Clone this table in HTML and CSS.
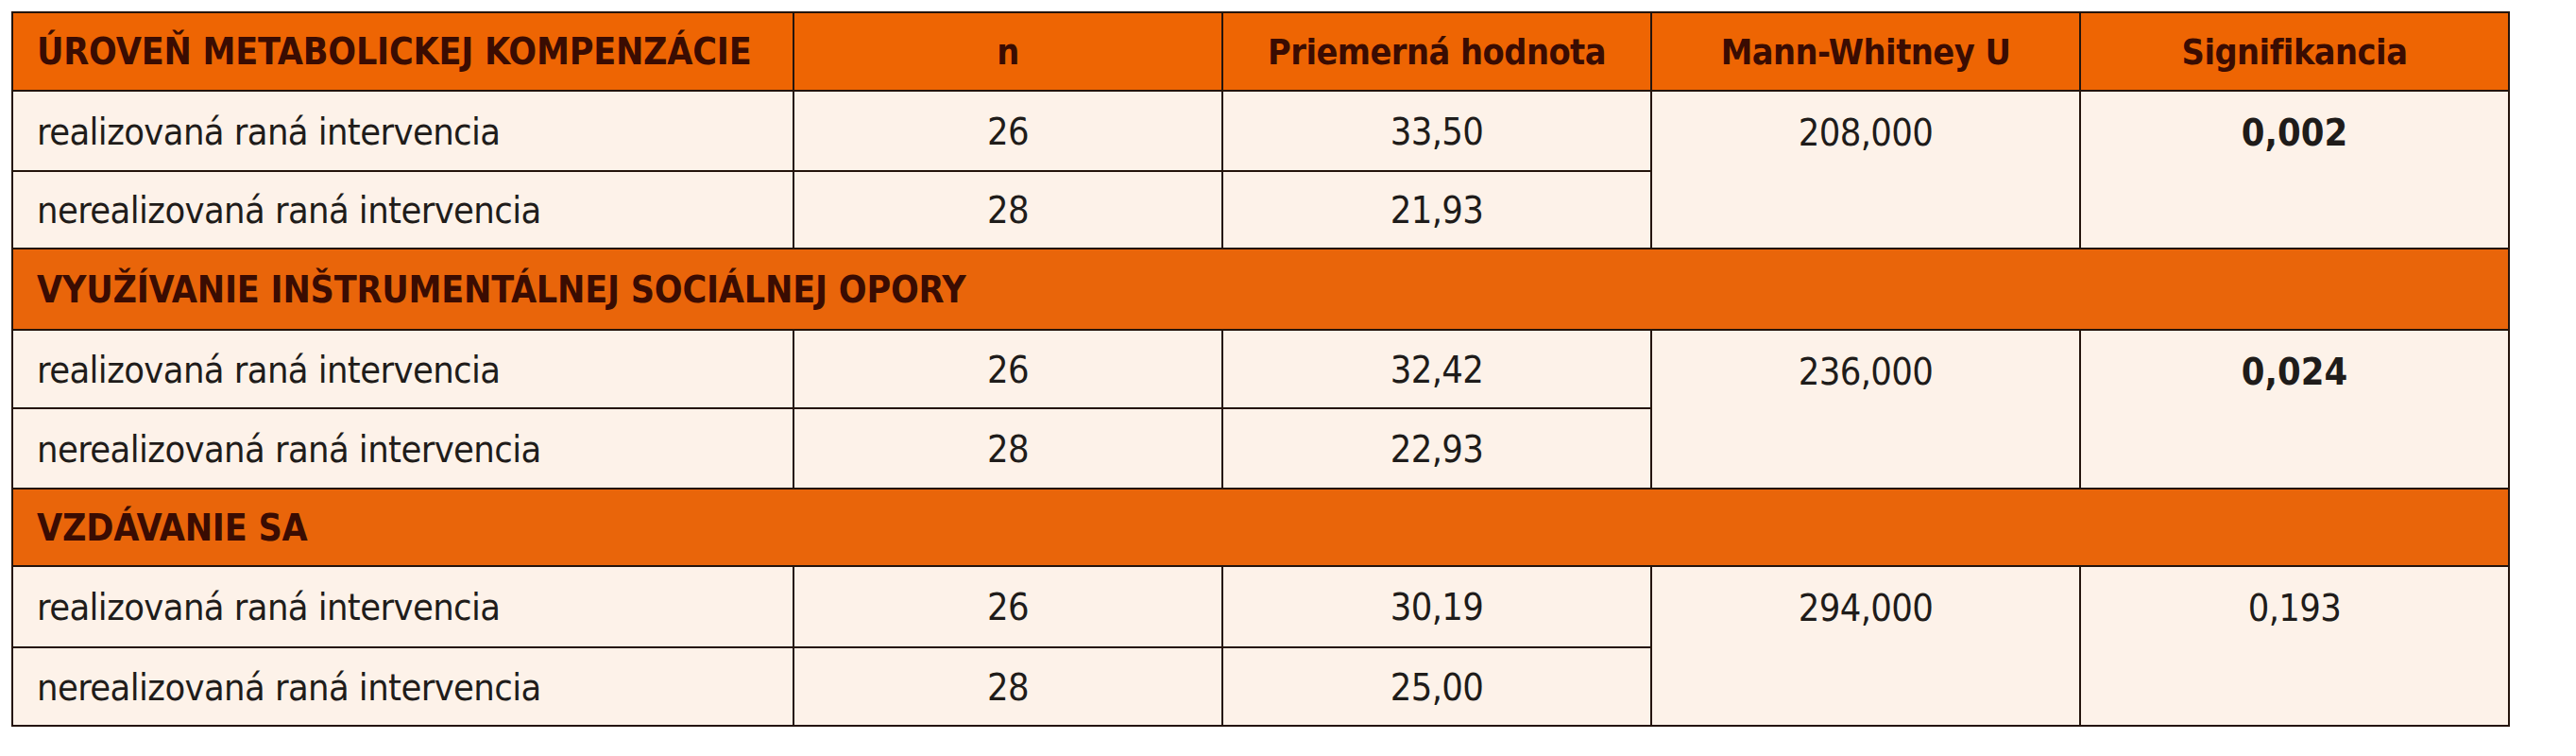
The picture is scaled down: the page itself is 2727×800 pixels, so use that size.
FILE: index.html
```html
<!DOCTYPE html>
<html lang="sk">
<head>
<meta charset="utf-8">
<title>Tabuľka</title>
<link rel="stylesheet" href="styles.css">
</head>
<body>
<table class="stats">
  <colgroup>
    <col class="c-label">
    <col class="c-num">
    <col class="c-num">
    <col class="c-num">
    <col class="c-num">
  </colgroup>
  <tr class="head r83">
    <th class="left">ÚROVEŇ METABOLICKEJ KOMPENZÁCIE</th>
    <th>n</th>
    <th>Priemerná hodnota</th>
    <th>Mann-Whitney U</th>
    <th>Signifikancia</th>
  </tr>
  <tr class="r85">
    <td class="left">realizovaná raná intervencia</td>
    <td>26</td>
    <td>33,50</td>
    <td class="merged" rowspan="2">208,000</td>
    <td class="merged strong" rowspan="2">0,002</td>
  </tr>
  <tr class="r82">
    <td class="left">nerealizovaná raná intervencia</td>
    <td>28</td>
    <td>21,93</td>
  </tr>
  <tr class="section r86">
    <th class="left" colspan="5">VYUŽÍVANIE INŠTRUMENTÁLNEJ SOCIÁLNEJ OPORY</th>
  </tr>
  <tr class="r83">
    <td class="left">realizovaná raná intervencia</td>
    <td>26</td>
    <td>32,42</td>
    <td class="merged" rowspan="2">236,000</td>
    <td class="merged strong" rowspan="2">0,024</td>
  </tr>
  <tr class="r85">
    <td class="left">nerealizovaná raná intervencia</td>
    <td>28</td>
    <td>22,93</td>
  </tr>
  <tr class="section r82">
    <th class="left" colspan="5">VZDÁVANIE SA</th>
  </tr>
  <tr class="r86">
    <td class="left">realizovaná raná intervencia</td>
    <td>26</td>
    <td>30,19</td>
    <td class="merged" rowspan="2">294,000</td>
    <td class="merged" rowspan="2">0,193</td>
  </tr>
  <tr class="r83">
    <td class="left">nerealizovaná raná intervencia</td>
    <td>28</td>
    <td>25,00</td>
  </tr>
</table>
</body>
</html>
```

FILE: styles.css
```css
html, body {
  margin: 0;
  padding: 0;
  background: #ffffff;
}

body {
  padding: 12px 0 0 12px;
}

.stats {
  border-collapse: collapse;
  table-layout: fixed;
  width: 2645px;
  font-family: "DejaVu Sans Condensed", "DejaVu Sans", sans-serif;
  font-stretch: condensed;
  color: #1f1c1a;
}

.c-label { width: 827px; }
.c-num { width: 454px; }

.stats th,
.stats td {
  border: 2px solid #24140c;
  padding: 0 10px;
  text-align: center;
  vertical-align: middle;
  box-sizing: border-box;
}

.stats td {
  background: #fdf2e9;
  font-size: 39.5px;
  font-weight: normal;
  letter-spacing: -0.6px;
}

.stats th {
  background: #ee6503;
  color: #3a0c02;
  font-size: 37.5px;
  font-weight: bold;
  letter-spacing: -0.5px;
}

.stats th.left {
  font-size: 39px;
  letter-spacing: -0.2px;
}

.stats .left {
  text-align: left;
  padding-left: 25px;
}

.stats .merged {
  vertical-align: top;
  padding-top: 20px;
}

.stats .strong {
  font-weight: bold;
  letter-spacing: 0;
}

.section th {
  background: #e9650a;
}

.r82 { height: 82px; }
.r83 { height: 83px; }
.r85 { height: 85px; }
.r86 { height: 86px; }
```
